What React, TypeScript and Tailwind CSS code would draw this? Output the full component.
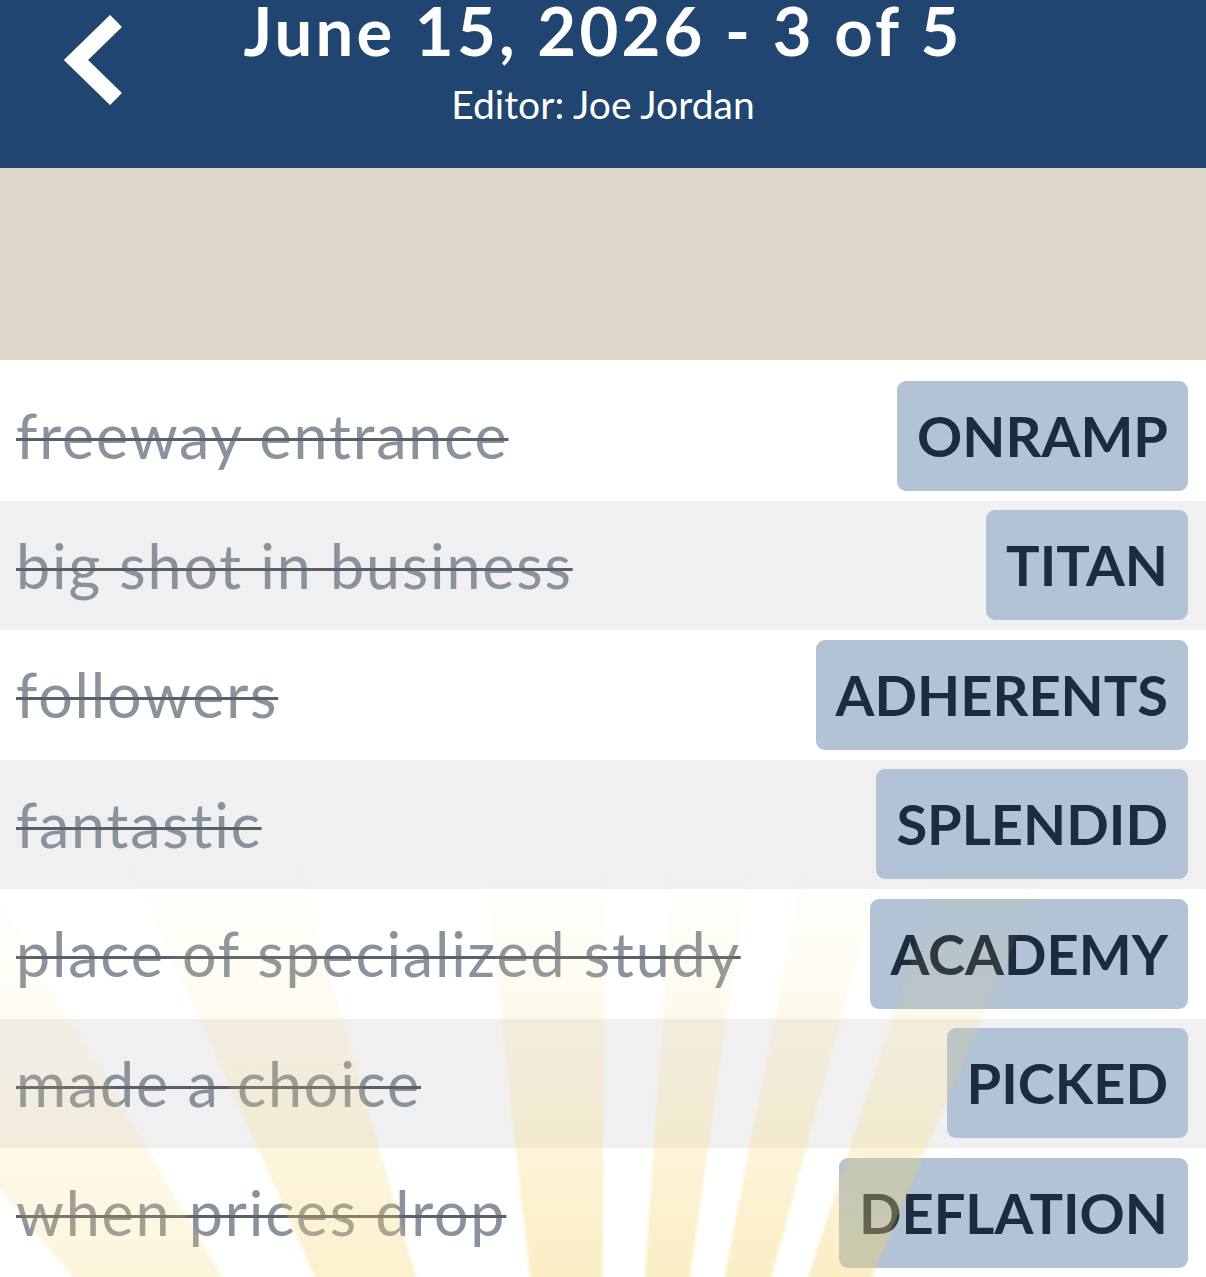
import React from 'react'

const clues = [
  { clue: 'freeway entrance', answer: 'ONRAMP' },
  { clue: 'big shot in business', answer: 'TITAN' },
  { clue: 'followers', answer: 'ADHERENTS' },
  { clue: 'fantastic', answer: 'SPLENDID' },
  { clue: 'place of specialized study', answer: 'ACADEMY' },
  { clue: 'made a choice', answer: 'PICKED' },
  { clue: 'when prices drop', answer: 'DEFLATION' },
]

// [angle, width, strength]
const rays: [number, number, number][] = [
  [-35, 9, 0.6],
  [-20, 8, 0.85],
  [-3, 6.5, 1],
  [6, 4, 1],
  [13, 4, 1],
  [20.5, 5, 1],
]

function Rays() {
  const cx = 600
  const cy = 1540
  const R = 2200
  const pt = (a: number) => {
    const r = (a * Math.PI) / 180
    return `${cx + R * Math.sin(r)},${cy - R * Math.cos(r)}`
  }
  return (
    <svg
      className="pointer-events-none absolute inset-0 h-full w-full"
      viewBox="0 0 1206 917"
      preserveAspectRatio="xMidYMin slice"
    >
      <defs>
        <linearGradient id="rayfade" gradientUnits="userSpaceOnUse" x1="0" y1="500" x2="0" y2="917">
          <stop offset="0" stopColor="#f6d36a" stopOpacity="0" />
          <stop offset="0.45" stopColor="#f6d36a" stopOpacity="0.17" />
          <stop offset="1" stopColor="#f6d36a" stopOpacity="0.4" />
        </linearGradient>
        <filter id="soft" x="-10%" y="-10%" width="120%" height="120%">
          <feGaussianBlur stdDeviation="1.5" />
        </filter>
      </defs>
      <g filter="url(#soft)">
        {rays.map(([a, w, s]) => (
          <polygon
            key={a}
            points={`${cx},${cy} ${pt(a - w / 2)} ${pt(a + w / 2)}`}
            fill="url(#rayfade)"
            opacity={s}
          />
        ))}
      </g>
    </svg>
  )
}

export default function App() {
  return (
    <div className="h-[1277px] overflow-hidden bg-white font-['Lato',sans-serif]">
      {/* HEADER */}
      <header className="grid h-[168px] grid-cols-[1fr_auto_1fr] bg-[#1f4570] text-white">
        <div className="pl-[62px] pt-[15px]">
          <svg width="62" height="90" viewBox="0 0 62 90" fill="none">
            <path d="M54 6 L14 45 L54 84" stroke="white" strokeWidth="17" strokeLinejoin="miter" />
          </svg>
        </div>
        <div className="flex flex-col items-center">
          <h1 className="-mt-[10px] text-[67px] font-bold leading-[80px] tracking-[3.2px]">June 15, 2026 - 3 of 5</h1>
          <p className="mt-[10px] text-[39px] leading-[48px]">Editor: Joe Jordan</p>
        </div>
        <div />
      </header>

      {/* BANNER */}
      <div className="h-[192px] bg-[#ddd7cb]" />

      {/* CLUES */}
      <div className="relative pt-[11px]">
        {clues.map((c, i) => (
          <div
            key={c.answer}
            className={`flex h-[129.5px] items-center justify-between pl-[16px] pr-[18px] ${i % 2 === 1 ? 'bg-[#f0f0f0]' : 'bg-white'}`}
          >
            <span className="text-[61px] leading-none tracking-[1.8px] text-[#8a929c] line-through decoration-[#57616c] decoration-[3px]">
              {c.clue}
            </span>
            <span className="flex h-[110px] items-center rounded-[9px] bg-[#b1c3d4] px-[20px] text-[56px] font-bold text-[#1c2b3e]">
              {c.answer}
            </span>
          </div>
        ))}
        <div className="h-[10px] bg-[#1f4570]" />
        <Rays />
      </div>
    </div>
  )
}
